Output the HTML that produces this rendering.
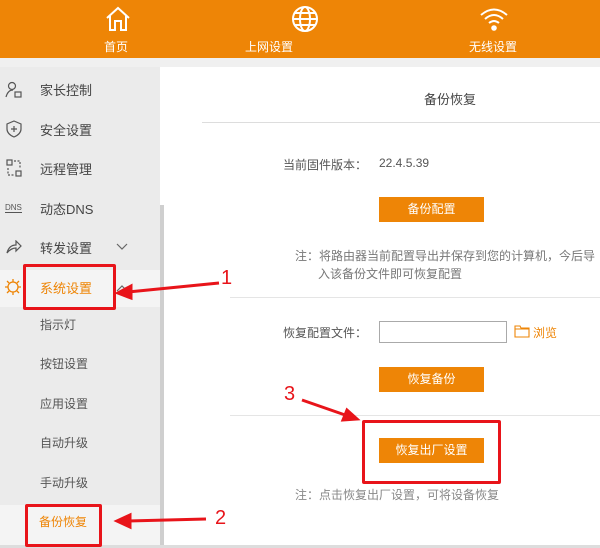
<!DOCTYPE html>
<html><head><meta charset="utf-8"><style>
body{margin:0;width:600px;height:548px;overflow:hidden;background:#fff;font-family:"Liberation Sans","Noto Sans CJK SC",sans-serif;position:relative}
.a{position:absolute;white-space:nowrap}
.hdr{position:absolute;left:0;top:0;width:600px;height:58px;background:#ee8506}
.strip{position:absolute;left:0;top:58px;width:600px;height:9px;background:#f0f0f0}
.side{position:absolute;left:0;top:67px;width:160px;height:478px;background:#ebebeb}
.nav{font-size:13px;color:#444}
.sub{font-size:12px;color:#555}
.btn{position:absolute;left:379px;width:105px;height:25px;background:#ee8506;color:#fff;font-size:12px;text-align:center;line-height:25px}
.t{font-size:12px;color:#555}
.rb{position:absolute;border:3px solid #e8141a;border-radius:2px}
.num{position:absolute;color:#e8141a;font-size:20px}
</style></head><body>
<div class="hdr"></div>
<svg class="a" style="left:104px;top:6px" width="28" height="26" viewBox="0 0 28 26" fill="none" stroke="#fff" stroke-width="2"><path d="M3 12 L14 2 L25 12 M6 10 V24 H11 V15 H17 V24 H22 V10"/></svg>
<div class="a" style="left:104px;top:38px;font-size:12px;color:#fff">首页</div>
<svg class="a" style="left:291px;top:5px" width="28" height="28" viewBox="0 0 28 28" fill="none" stroke="#fff" stroke-width="2"><circle cx="14" cy="14" r="12"/><ellipse cx="14" cy="14" rx="5" ry="12"/><path d="M2 14H26M4 8H24M4 20H24"/></svg>
<div class="a" style="left:245px;top:38px;font-size:12px;color:#fff">上网设置</div>
<svg class="a" style="left:479px;top:7px" width="30" height="24" viewBox="0 0 30 24" fill="none" stroke="#fff" stroke-width="2"><path d="M2 8 Q15 -3 28 8M6 12 Q15 4 24 12M10 16 Q15 12 20 16"/><circle cx="15" cy="21" r="1.8" fill="#fff"/></svg>
<div class="a" style="left:469px;top:38px;font-size:12px;color:#fff">无线设置</div>
<div class="strip"></div>
<div class="side"></div>
<div class="a" style="left:0;top:270px;width:160px;height:37px;background:#f4f4f4"></div>
<div class="a" style="left:0;top:505px;width:160px;height:40px;background:#f4f4f4"></div>
<div class="a" style="left:160px;top:205px;width:4px;height:340px;background:#cfcfcf"></div>
<div class="a" style="left:0;top:545px;width:600px;height:3px;background:#ddd"></div>
<svg class="a" style="left:5px;top:81px" width="18" height="18" viewBox="0 0 18 18" fill="none" stroke="#555" stroke-width="1.2"><circle cx="7" cy="5" r="3.5"/><path d="M1 16 Q3 9 8 9"/><rect x="10" y="11" width="6" height="5"/></svg>
<div class="a nav" style="left:40px;top:80px">家长控制</div>
<svg class="a" style="left:6px;top:120px" width="16" height="18" viewBox="0 0 16 18" fill="none" stroke="#555" stroke-width="1.2"><path d="M8 1 L15 4 V9 Q15 14 8 17 Q1 14 1 9 V4 Z M8 6V12M5 9H11"/></svg>
<div class="a nav" style="left:40px;top:120px">安全设置</div>
<svg class="a" style="left:6px;top:159px" width="16" height="18" viewBox="0 0 16 18" fill="none" stroke="#555" stroke-width="1.2"><rect x="1" y="1" width="5" height="5"/><rect x="10" y="12" width="5" height="5"/><path d="M8 2H14V9M2 9V16H8" stroke-dasharray="2 1.5"/></svg>
<div class="a nav" style="left:40px;top:159px">远程管理</div>
<div class="a" style="left:5px;top:203px;font-size:8px;color:#555;border-bottom:1px solid #555">DNS</div>
<div class="a nav" style="left:40px;top:199px">动态DNS</div>
<svg class="a" style="left:6px;top:240px" width="16" height="14" viewBox="0 0 16 14" fill="none" stroke="#555" stroke-width="1.2"><path d="M1 13 Q3 5 10 5 V1 L15 6 L10 11 V8 Q5 8 1 13Z"/></svg>
<div class="a nav" style="left:40px;top:238px">转发设置</div>
<svg class="a" style="left:116px;top:243px" width="12" height="8" viewBox="0 0 12 8" fill="none" stroke="#666" stroke-width="1.2"><path d="M1 1 L6 6 L11 1"/></svg>
<svg class="a" style="left:4px;top:278px" width="18" height="18" viewBox="0 0 18 18" fill="none" stroke="#ee8506" stroke-width="1.3"><circle cx="9" cy="9" r="5"/><path d="M9 1V4M9 14V17M1 9H4M14 9H17M3 3L5 5M13 13L15 15M3 15L5 13M13 5L15 3"/></svg>
<div class="a nav" style="left:40px;top:278px;color:#ee8506">系统设置</div>
<svg class="a" style="left:116px;top:284px" width="12" height="8" viewBox="0 0 12 8" fill="none" stroke="#666" stroke-width="1.2"><path d="M1 7 L6 2 L11 7"/></svg>
<div class="a sub" style="left:40px;top:316px">指示灯</div>
<div class="a sub" style="left:40px;top:355px">按钮设置</div>
<div class="a sub" style="left:40px;top:395px">应用设置</div>
<div class="a sub" style="left:40px;top:434px">自动升级</div>
<div class="a sub" style="left:40px;top:474px">手动升级</div>
<div class="a sub" style="left:39px;top:513px;color:#ee8506">备份恢复</div>

<div class="a" style="left:424px;top:89px;font-size:13px;color:#444">备份恢复</div>
<div class="a" style="left:202px;top:122px;width:398px;height:1px;background:#ddd"></div>
<div class="a t" style="left:283px;top:156px">当前固件版本：</div>
<div class="a t" style="left:379px;top:156px">22.4.5.39</div>
<div class="btn" style="top:197px">备份配置</div>
<div class="a t" style="left:295px;top:247px;color:#777">注：将路由器当前配置导出并保存到您的计算机，今后导</div>
<div class="a t" style="left:318px;top:265px;color:#777">入该备份文件即可恢复配置</div>
<div class="a" style="left:230px;top:297px;width:370px;height:1px;background:#e5e5e5"></div>
<div class="a t" style="left:283px;top:324px">恢复配置文件：</div>
<div class="a" style="left:379px;top:321px;width:126px;height:20px;border:1px solid #aaa"></div>
<svg class="a" style="left:514px;top:325px" width="16" height="13" viewBox="0 0 16 13" fill="none" stroke="#ee8506" stroke-width="1.1"><path d="M1 1H6L7 3H15V12H1Z M1 4H15"/></svg>
<div class="a t" style="left:533px;top:324px;color:#ee8506">浏览</div>
<div class="btn" style="top:367px">恢复备份</div>
<div class="a" style="left:230px;top:415px;width:370px;height:1px;background:#e5e5e5"></div>
<div class="btn" style="top:438px">恢复出厂设置</div>
<div class="a t" style="left:295px;top:486px;color:#888;width:204px;overflow:hidden">注：点击恢复出厂设置，可将设备恢复</div>

<div class="rb" style="left:23px;top:264px;width:87px;height:40px"></div>
<div class="rb" style="left:25px;top:504px;width:71px;height:37px"></div>
<div class="rb" style="left:362px;top:420px;width:133px;height:58px"></div>
<svg class="a" style="left:0;top:0" width="600" height="548" fill="none" stroke="#e8141a" stroke-width="3">
<path d="M219 283 L128 292"/><path d="M118 293 L131 286 L131 298Z" fill="#e8141a"/>
<path d="M206 519 L128 521"/><path d="M117 521 L130 515 L130 527Z" fill="#e8141a"/>
<path d="M302 400 L348 416"/><path d="M357 419 L343 420 L347 410Z" fill="#e8141a"/>
</svg>
<div class="num" style="left:221px;top:267px">1</div>
<div class="num" style="left:215px;top:507px">2</div>
<div class="num" style="left:284px;top:383px">3</div>
</body></html>
